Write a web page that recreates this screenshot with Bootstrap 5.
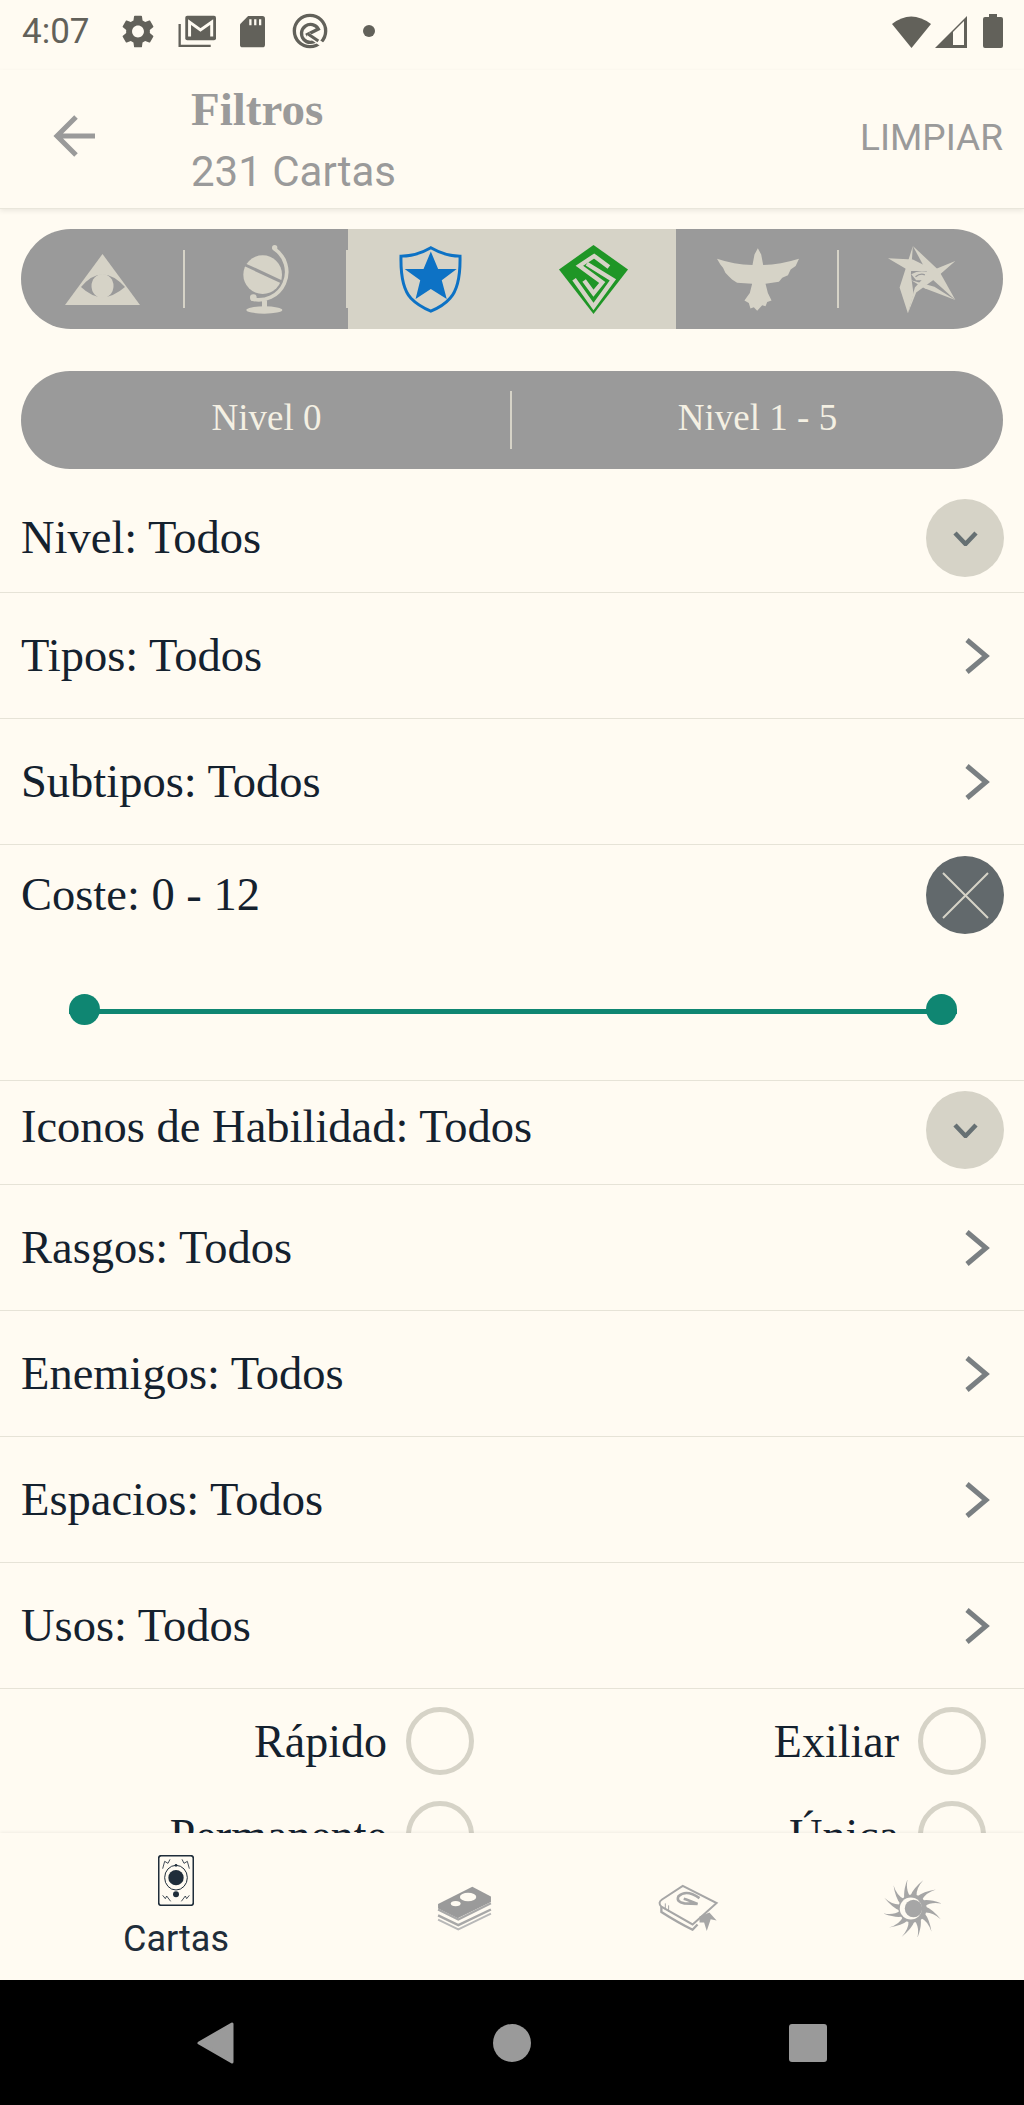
<!DOCTYPE html>
<html lang="es">
<head>
  <meta charset="UTF-8">
  <title>Filtros</title>
  <meta name="viewport" content="width=device-width, initial-scale=1" />
  <link href="https://cdn.jsdelivr.net/npm/bootstrap@5.3.0/dist/css/bootstrap.min.css" rel="stylesheet" />
  <style>
    html, body { height: 100%; }
    body {
      margin: 0;
      background-color: #fffbf2;
      color: #14212e;
      font-family: "Liberation Serif", serif;
      overflow: hidden;
    }
    svg { display: block; flex: none; }

    .screen { height: 2105px; }

    .status-bar { height: 70px; padding: 0 21px 8px 22px; font: 35px/1 Roboto, sans-serif; color: #62615a; }
    .status-time { padding-right: 8px; }

    .top-bar {
      height: 139px;
      background-color: #fffbf2;
      border-bottom: 1px solid #e9e6db;
      box-shadow: 0 2px 5px rgba(0, 0, 0, .08);
      padding: 0 21px 0 53px;
      z-index: 2;
    }
    .top-back { margin-bottom: 6px; }
    .top-titles { margin-left: 96px; padding-bottom: 2px; }
    .top-title { font-size: 47px; line-height: 56px; font-weight: 700; color: #9a9a9a; }
    .top-sub { font: 42px/46px Roboto, sans-serif; color: #9a9a9a; margin-top: 12px; }
    .top-action { font: 37px/1 Roboto, sans-serif; color: #9a9a9a; margin-bottom: 4px; }

    .filter-body { min-height: 0; overflow: hidden; }

    .pill-bar { margin: 0 21px; background-color: #9a9a9a; overflow: hidden; border-radius: 50px; }
    .faction-bar { margin-top: 20px; height: 100px; }
    .level-bar { margin-top: 42px; height: 98px; }
    .seg { flex: 1 1 0; position: relative; height: 100%; }
    .seg-on { background-color: #d6d3c7; }
    .seg-split::after {
      content: "";
      position: absolute;
      right: 0;
      top: 50%;
      width: 2px;
      height: 58px;
      margin-top: -29px;
      background-color: #d6d3c7;
    }
    .level-text { font-size: 37px; color: #f4f0e3; padding-bottom: 4px; }

    .filter-row { border-bottom: 1px solid #e6e3d7; font-size: 46.5px; line-height: 1.2; padding-left: 21px; }
    .row-level { height: 124px; padding-top: 15px; }
    .row-link { height: 126px; }
    .row-cost { height: 236px; padding-top: 11px; }
    .row-skill { height: 104px; padding-top: 10px; }

    .row-arrow { margin-right: 34px; }
    .round-btn { width: 78px; height: 78px; margin-right: 20px; border-radius: 50%; background-color: #d6d3c7; }
    .round-dark { background-color: #62696c; }

    .range-wrap { height: 31px; margin: 60px 67px 0 48px; position: relative; }
    .range-line { height: 5px; background-color: #0f8672; margin-top: 3px; width: 100%; }
    .range-thumb { position: absolute; top: 0; width: 31px; height: 31px; border-radius: 50%; background-color: #0f8672; }
    .thumb-a { left: 0; }
    .thumb-b { right: 0; }

    .check-list { padding-top: 5px; }
    .check-row { height: 94px; padding-right: 38px; font-size: 46px; }
    .check-ring { width: 68px; height: 68px; margin-left: 19px; border: 5px solid #d6d3c7; border-radius: 50%; }

    .tab-bar { height: 147px; background-color: #fffbf2; box-shadow: 0 -1px 3px rgba(0, 0, 0, .06); z-index: 2; }
    .tab-main { width: 352px; padding-top: 22px; }
    .tab-item { width: 224px; padding-top: 3px; }
    .tab-label { font: 36px/1 Roboto, sans-serif; color: #1f2d3a; margin-top: 15px; }

    .system-bar { height: 125px; background-color: #000; gap: 256px; }
  </style>
</head>
<body>
<div class="screen d-flex flex-column">

  <!-- status bar -->
  <div class="status-bar d-flex align-items-center gap-4 flex-shrink-0">
    <span class="status-time">4:07</span>
    <svg width="32" height="33" viewBox="2.5 2 19 20" fill="#62615a"><path d="M19.14 12.94c.04-.3.06-.61.06-.94 0-.32-.02-.64-.07-.94l2.03-1.58c.18-.14.23-.41.12-.61l-1.92-3.32c-.12-.22-.37-.29-.59-.22l-2.39.96c-.5-.38-1.03-.7-1.62-.94l-.36-2.54c-.04-.24-.24-.41-.48-.41h-3.84c-.24 0-.43.17-.47.41l-.36 2.54c-.59.24-1.13.57-1.62.94l-2.39-.96c-.22-.08-.47 0-.59.22L2.74 8.87c-.12.21-.08.47.12.61l2.03 1.58c-.05.3-.09.63-.09.94s.02.64.07.94l-2.03 1.58c-.18.14-.23.41-.12.61l1.92 3.32c.12.22.37.29.59.22l2.39-.96c.5.38 1.03.7 1.62.94l.36 2.54c.05.24.24.41.48.41h3.84c.24 0 .44-.17.47-.41l.36-2.54c.59-.24 1.13-.56 1.62-.94l2.39.96c.22.08.47 0 .59-.22l1.92-3.32c.12-.22.07-.47-.12-.61l-2.01-1.58zM12 15.6c-1.98 0-3.6-1.62-3.6-3.6s1.62-3.6 3.6-3.6 3.6 1.62 3.6 3.6-1.62 3.6-3.6 3.6z"/></svg>
    <svg width="38" height="33" viewBox="533 45 115 99">
      <path d="M538 72V138H632" fill="none" stroke="#62615a" stroke-width="7"/>
      <rect x="555" y="47" width="93" height="74" rx="6" fill="#62615a"/>
      <path d="M568 110V66L601 90L635 66V110" fill="none" stroke="#fffbf2" stroke-width="9"/>
    </svg>
    <svg width="25" height="33" viewBox="725 45 77 99">
      <path d="M750 47H794Q802 47 802 55V135Q802 143 794 143H733Q725 143 725 135V72Z" fill="#62615a"/>
      <path d="M757 57V75M772 57V75M787 57V75" stroke="#fffbf2" stroke-width="7"/>
    </svg>
    <svg width="40" height="36" viewBox="874 38 120 108" fill="none" stroke="#62615a" stroke-width="10">
      <circle cx="937" cy="92" r="47"/>
      <path d="M958 118A27 27 0 1 1 962 86L925 105"/>
      <path d="M930 102L978 136" stroke="#fffbf2" stroke-width="14"/>
      <path d="M930 100L962 122" stroke-width="9"/>
    </svg>
    <svg width="32" height="12" viewBox="0 0 32 12"><circle cx="16" cy="6" r="6" fill="#62615a"/></svg>

    <div class="ms-auto d-flex align-items-center">
      <svg width="39" height="33" viewBox="0 0 39 33"><path d="M0 9Q19 -6 39 9L19.5 33Z" fill="#62615a"/></svg>
      <svg class="ms-1" width="32" height="33" viewBox="0 0 32 33">
        <path d="M0 33L32 1V33Z" fill="#62615a"/>
        <path d="M18 17L29 6V30H18Z" fill="#fffbf2"/>
      </svg>
      <svg class="ms-3" width="20" height="34" viewBox="0 0 20 34"><path d="M6 0H14V3H18Q20 3 20 5V32Q20 34 18 34H2Q0 34 0 32V5Q0 3 2 3H6Z" fill="#62615a"/></svg>
    </div>
  </div>

  <!-- top bar -->
  <div class="top-bar d-flex align-items-center position-relative flex-shrink-0">
    <svg class="top-back" width="42" height="42" viewBox="0 0 42 42" fill="none" stroke="#9a9a9a" stroke-width="5"><path d="M42 21H4M23 2L4 21L23 40"/></svg>
    <div class="top-titles">
      <div class="top-title">Filtros</div>
      <div class="top-sub">231 Cartas</div>
    </div>
    <div class="top-action ms-auto">LIMPIAR</div>
  </div>

  <div class="filter-body flex-grow-1">
    <div class="pill-bar faction-bar d-flex">
      <div class="seg seg-split d-flex align-items-center justify-content-center">
        <svg width="75" height="51" viewBox="0 0 75 51">
          <path d="M37.5 0L75 51H0Z" fill="#d6d3c7"/>
          <path d="M16 33Q37 8 60 33Q37 53 16 33Z" fill="#9a9a9a"/>
          <ellipse cx="37.5" cy="32" rx="11" ry="12" fill="#d6d3c7"/>
        </svg>
      </div>
      <div class="seg seg-split d-flex align-items-center justify-content-center">
        <svg width="48" height="69" viewBox="546 25 144 205" fill="#d6d3c7">
          <circle cx="605" cy="113" r="58"/>
          <path d="M553 84L665 136" stroke="#9a9a9a" stroke-width="9"/>
          <path d="M640 35A84 84 0 0 1 572 186" fill="none" stroke="#d6d3c7" stroke-width="11"/>
          <circle cx="641" cy="32" r="8"/>
          <circle cx="577" cy="182" r="10"/>
          <path d="M603 190H618V212H603Z"/>
          <ellipse cx="610" cy="219" rx="54" ry="11"/>
        </svg>
      </div>
      <div class="seg seg-on d-flex align-items-center justify-content-center">
        <svg width="63" height="67" viewBox="26 28 190 201">
          <path d="M122 33Q165 58 210 58Q212 150 180 185Q160 208 122 224Q84 208 62 185Q30 150 32 58Q80 58 122 33Z" fill="none" stroke="#0d72c5" stroke-width="9"/>
          <path d="M122 44L144 97H200L155 131L170 187L122 157L76 187L90 131L43 97H100Z" fill="#0d72c5"/>
        </svg>
      </div>
      <div class="seg seg-on d-flex align-items-center justify-content-center">
        <svg width="69" height="69" viewBox="507 22 206 206">
          <path d="M610 22L713 95L610 228L507 95Z" fill="#1f9626"/>
          <g fill="none" stroke="#d6d3c7" stroke-width="13">
            <path d="M656 88L612 55L568 84L636 134L610 166L582 128"/>
            <path d="M552 124L610 206L668 126L590 78"/>
          </g>
        </svg>
      </div>
      <div class="seg seg-split d-flex align-items-center justify-content-center">
        <svg width="82" height="63" viewBox="20 42 245 186">
          <path d="M142 42L152 60L158 92Q210 90 265 73L255 95L240 105L232 122L215 130L205 142L165 148L172 175L183 198L170 202L165 215L155 212L140 228L130 218L120 222L115 205L102 198L118 175L125 148L80 145L65 135L55 125L45 115L38 100L30 90L20 73Q70 90 126 92L132 60Z" fill="#d6d3c7"/>
        </svg>
      </div>
      <div class="seg d-flex align-items-center justify-content-center">
        <svg width="69" height="69" viewBox="512 22 208 208" fill="#d6d3c7">
          <path d="M590 25L668 98L718 188L640 118Z"/>
          <path d="M575 228L550 150L590 25L584 110L592 170Z"/>
          <path d="M515 62L590 66L660 100L580 100Z"/>
          <path d="M718 70L640 102L596 150L575 228L600 165L655 125Z"/>
          <path d="M718 188L655 148L585 128L625 152Z"/>
          <path d="M585 110Q610 95 640 105L630 125Q615 130 600 128Z"/>
          <path d="M598 118Q612 106 626 112" fill="none" stroke="#9a9a9a" stroke-width="4"/>
        </svg>
      </div>
    </div>

    <div class="pill-bar level-bar d-flex">
      <div class="seg seg-split level-text d-flex align-items-center justify-content-center">Nivel 0</div>
      <div class="seg level-text d-flex align-items-center justify-content-center">Nivel 1 - 5</div>
    </div>

    <div class="filter-row row-level d-flex align-items-center justify-content-between">
      <span>Nivel: Todos</span>
      <div class="round-btn d-flex align-items-center justify-content-center">
        <svg width="25" height="15" viewBox="0 0 25 15" fill="none" stroke="#667073" stroke-width="4.5"><path d="M2 2L12.5 13L23 2"/></svg>
      </div>
    </div>
    <div class="filter-row row-link d-flex align-items-center justify-content-between">
      <span>Tipos: Todos</span>
      <svg class="row-arrow" width="27" height="38" viewBox="0 0 27 38" fill="none" stroke="#7a7f82" stroke-width="5"><path d="M4 3L23 19L4 35"/></svg>
    </div>
    <div class="filter-row row-link d-flex align-items-center justify-content-between">
      <span>Subtipos: Todos</span>
      <svg class="row-arrow" width="27" height="38" viewBox="0 0 27 38" fill="none" stroke="#7a7f82" stroke-width="5"><path d="M4 3L23 19L4 35"/></svg>
    </div>

    <div class="filter-row row-cost">
      <div class="d-flex align-items-center justify-content-between">
        <span>Coste: 0 - 12</span>
        <div class="round-btn round-dark d-flex align-items-center justify-content-center">
          <svg width="47" height="47" viewBox="0 0 47 47" stroke="#d6d3c7" stroke-width="2"><path d="M1 1L46 46M46 1L1 46"/></svg>
        </div>
      </div>
      <div class="range-wrap d-flex align-items-center">
        <div class="range-line"></div>
        <div class="range-thumb thumb-a"></div>
        <div class="range-thumb thumb-b"></div>
      </div>
    </div>

    <div class="filter-row row-skill d-flex align-items-start justify-content-between">
      <span class="mt-2">Iconos de Habilidad: Todos</span>
      <div class="round-btn d-flex align-items-center justify-content-center">
        <svg width="25" height="15" viewBox="0 0 25 15" fill="none" stroke="#667073" stroke-width="4.5"><path d="M2 2L12.5 13L23 2"/></svg>
      </div>
    </div>
    <div class="filter-row row-link d-flex align-items-center justify-content-between">
      <span>Rasgos: Todos</span>
      <svg class="row-arrow" width="27" height="38" viewBox="0 0 27 38" fill="none" stroke="#7a7f82" stroke-width="5"><path d="M4 3L23 19L4 35"/></svg>
    </div>
    <div class="filter-row row-link d-flex align-items-center justify-content-between">
      <span>Enemigos: Todos</span>
      <svg class="row-arrow" width="27" height="38" viewBox="0 0 27 38" fill="none" stroke="#7a7f82" stroke-width="5"><path d="M4 3L23 19L4 35"/></svg>
    </div>
    <div class="filter-row row-link d-flex align-items-center justify-content-between">
      <span>Espacios: Todos</span>
      <svg class="row-arrow" width="27" height="38" viewBox="0 0 27 38" fill="none" stroke="#7a7f82" stroke-width="5"><path d="M4 3L23 19L4 35"/></svg>
    </div>
    <div class="filter-row row-link d-flex align-items-center justify-content-between">
      <span>Usos: Todos</span>
      <svg class="row-arrow" width="27" height="38" viewBox="0 0 27 38" fill="none" stroke="#7a7f82" stroke-width="5"><path d="M4 3L23 19L4 35"/></svg>
    </div>

    <div class="row g-0 check-list">
      <div class="col-6 check-row d-flex align-items-center justify-content-end"><span>Rápido</span><div class="check-ring"></div></div>
      <div class="col-6 check-row d-flex align-items-center justify-content-end"><span>Exiliar</span><div class="check-ring"></div></div>
      <div class="col-6 check-row d-flex align-items-center justify-content-end"><span>Permanente</span><div class="check-ring"></div></div>
      <div class="col-6 check-row d-flex align-items-center justify-content-end"><span>Única</span><div class="check-ring"></div></div>
    </div>
  </div>

  <!-- tab bar -->
  <div class="tab-bar d-flex position-relative flex-shrink-0">
    <div class="tab-main d-flex flex-column align-items-center">
      <svg width="36" height="51" viewBox="24 29 108 153" fill="none" stroke="#1f2d3a">
        <rect x="26" y="31" width="104" height="149" rx="8" stroke-width="5"/>
        <circle cx="78" cy="97" r="23" fill="#1f2d3a" stroke="none"/>
        <ellipse cx="78" cy="97" rx="34" ry="37" stroke-width="3"/>
        <circle cx="78" cy="60" r="4" fill="#1f2d3a" stroke="none"/>
        <circle cx="78" cy="147" r="9" fill="#1f2d3a" stroke="none"/>
        <path d="M38 70L44 48L54 54L60 42M118 70L112 48L102 54L96 42M38 150L46 160L50 152L62 168M118 150L110 160L106 152L94 168" stroke-width="2.5"/>
      </svg>
      <div class="tab-label">Cartas</div>
    </div>
    <div class="tab-item d-flex align-items-center justify-content-center">
      <svg width="55" height="45" viewBox="858 123 166 138">
        <path d="M965 125L1022 155V172L920 222L860 192V178Z" fill="#9a9a9a"/>
        <ellipse cx="952" cy="157" rx="25" ry="13" fill="#fffbf2"/>
        <ellipse cx="914" cy="177" rx="15" ry="8" fill="#fffbf2"/>
        <path d="M860 195L922 226L1022 176M860 213L922 243L1022 195" fill="none" stroke="#a8a8a8" stroke-width="7"/>
        <path d="M860 226L922 256L1022 208" fill="none" stroke="#b8b8b8" stroke-width="6"/>
      </svg>
    </div>
    <div class="tab-item d-flex align-items-center justify-content-center">
      <svg width="62" height="48" viewBox="28 73 186 146" fill="none" stroke="#a6a6a6">
        <path d="M105 79L208 131L135 196L40 142Q28 130 42 120Z" stroke-width="6"/>
        <path d="M40 142V158Q90 190 135 212L150 196" stroke-width="7"/>
        <path d="M52 132V152M62 138V158" stroke-width="3"/>
        <path d="M156 116Q116 88 92 110Q84 128 110 132L150 134Q122 122 108 118" stroke-width="8"/>
        <path d="M156 172L186 160L208 184L190 180L178 216L170 190L156 190Z" fill="#a6a6a6" stroke="none"/>
      </svg>
    </div>
    <div class="tab-item d-flex align-items-center justify-content-center">
      <svg width="57" height="57" viewBox="-85 -85 170 170">
        <defs><path id="sun-ray" d="M-6 -38Q2 -60 32 -84Q10 -60 12 -36Z" fill="#a6a6a6"/></defs>
        <use href="#sun-ray"/>
        <use href="#sun-ray" transform="rotate(30)"/>
        <use href="#sun-ray" transform="rotate(60)"/>
        <use href="#sun-ray" transform="rotate(90)"/>
        <use href="#sun-ray" transform="rotate(120)"/>
        <use href="#sun-ray" transform="rotate(150)"/>
        <use href="#sun-ray" transform="rotate(180)"/>
        <use href="#sun-ray" transform="rotate(210)"/>
        <use href="#sun-ray" transform="rotate(240)"/>
        <use href="#sun-ray" transform="rotate(270)"/>
        <use href="#sun-ray" transform="rotate(300)"/>
        <use href="#sun-ray" transform="rotate(330)"/>
        <circle r="42" fill="#a6a6a6"/>
        <circle cx="-5" cy="0" r="33" fill="#fffbf2"/>
        <circle cx="3" cy="0" r="26" fill="#a6a6a6"/>
      </svg>
    </div>
  </div>

  <!-- android nav -->
  <div class="system-bar d-flex align-items-center justify-content-center flex-shrink-0">
    <svg width="40" height="44" viewBox="0 0 40 44"><path d="M3 22L36 3V41Z" fill="#9a9a9a" stroke="#9a9a9a" stroke-width="3" stroke-linejoin="round"/></svg>
    <svg width="40" height="40" viewBox="0 0 40 40"><circle cx="20" cy="20" r="19" fill="#9a9a9a"/></svg>
    <svg width="40" height="40" viewBox="0 0 40 40"><rect x="1" y="1" width="38" height="38" rx="3" fill="#9a9a9a"/></svg>
  </div>
</div>
<script src="https://cdn.jsdelivr.net/npm/bootstrap@5.3.0/dist/js/bootstrap.bundle.min.js"></script>
</body>
</html>
